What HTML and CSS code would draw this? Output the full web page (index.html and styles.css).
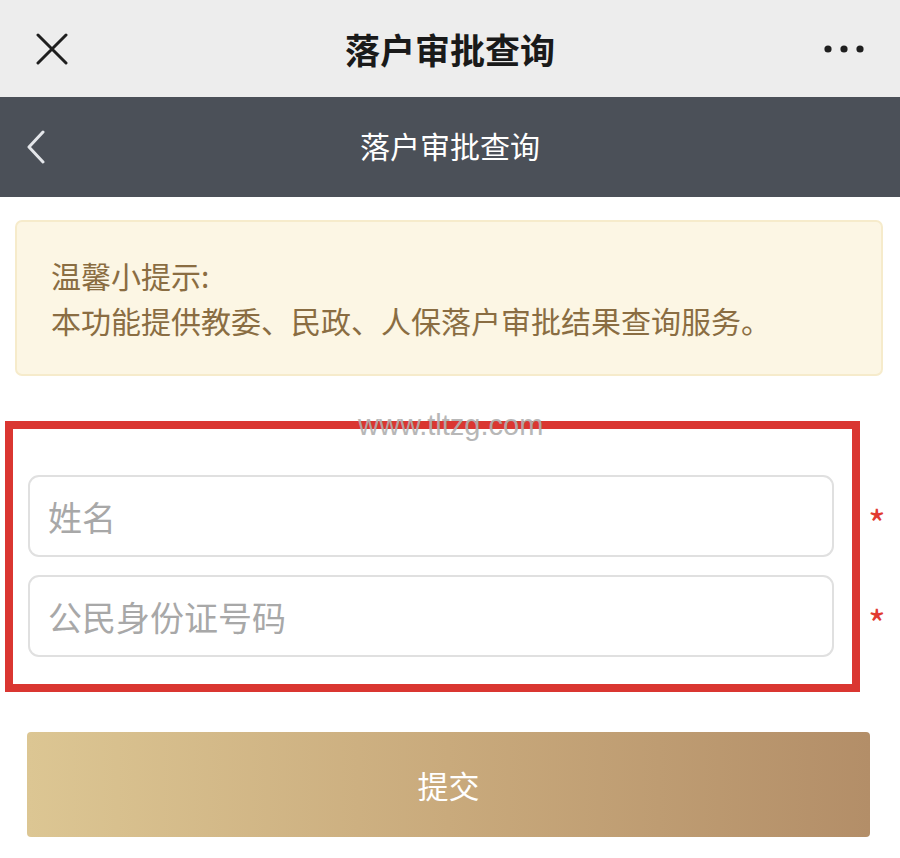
FILE: index.html
```html
<!DOCTYPE html>
<html lang="zh-CN">
  <head>
    <meta charset="UTF-8" />
    <meta name="viewport" content="width=device-width, initial-scale=1.0" />
    <title>落户审批查询</title>
    <link rel="stylesheet" href="styles.css">
  </head>
  <body>
    <div class="top-bar">
      <svg class="close-icon" width="32" height="32" viewBox="0 0 32 32">
        <path d="M2 2 L30 30 M30 2 L2 30" stroke="#1f1f1f" stroke-width="3" fill="none" stroke-linecap="round" />
      </svg>
      <div class="top-title">落户审批查询</div>
      <svg class="more-icon" width="40" height="10" viewBox="0 0 40 10">
        <circle cx="4" cy="5" r="3.6" fill="#1f1f1f" />
        <circle cx="20" cy="5" r="3.6" fill="#1f1f1f" />
        <circle cx="36" cy="5" r="3.6" fill="#1f1f1f" />
      </svg>
    </div>

    <div class="nav-bar">
      <svg class="back-icon" width="20" height="34" viewBox="0 0 20 34">
        <path d="M17 2 L3 17 L17 32" stroke="#e4e6ea" stroke-width="3" fill="none" stroke-linecap="round" stroke-linejoin="round" />
      </svg>
      <div class="nav-title">落户审批查询</div>
    </div>

    <div class="content">
      <div class="tip">
        <p>温馨小提示:</p>
        <p>本功能提供教委、民政、人保落户审批结果查询服务。</p>
      </div>

      <div class="form">
        <div class="form-row">
          <input type="text" placeholder="姓名" />
          <span class="required">*</span>
        </div>
        <div class="form-row">
          <input type="text" placeholder="公民身份证号码" />
          <span class="required">*</span>
        </div>
      </div>

      <button class="submit">提交</button>

      <!-- 标注框与水印 -->
      <div class="mark-box"></div>
      <div class="watermark">www.tltzg.com</div>
    </div>
  </body>
</html>
```

FILE: styles.css
```css
body {
  margin: 0;
  padding: 0;
  background-color: #fff;
  font-family: "Noto Sans CJK SC", "Noto Sans", sans-serif;
  color: #333;
}
.top-bar {
  height: 97px;
  background-color: #ededed;
  display: flex;
  align-items: center;
  justify-content: space-between;
  padding: 0 36px 0 36px;
  box-sizing: border-box;
  position: relative;
}
.top-title {
  position: absolute;
  left: 0;
  right: 0;
  text-align: center;
  font-size: 35px;
  font-weight: 600;
  color: #1a1a1a;
  line-height: 97px;
}
.close-icon,
.more-icon {
  position: relative;
  z-index: 1;
}
.nav-bar {
  height: 100px;
  background-color: #4b5058;
  display: flex;
  align-items: center;
  padding-left: 26px;
  position: relative;
}
.nav-title {
  position: absolute;
  left: 0;
  right: 0;
  top: -2px;
  text-align: center;
  font-size: 30px;
  color: #fff;
  line-height: 100px;
}
.content {
  position: relative;
  padding: 23px 17px 40px 15px;
}
.tip {
  background-color: #fcf6e4;
  border: 2px solid #f6ebcb;
  border-radius: 7px;
  padding: 31px 34px;
  color: #8a6d42;
  font-size: 30px;
  line-height: 45px;
}
.tip p {
  margin: 0;
}
.form {
  margin-top: 99px;
  padding-left: 13px;
}
.form-row {
  display: flex;
  align-items: center;
  margin-bottom: 18px;
}
.form-row input {
  flex-shrink: 0;
  width: 806px;
  height: 82px;
  padding: 0 18px;
  border: 2px solid #e0e0e0;
  border-radius: 11px;
  box-sizing: border-box;
  font-family: inherit;
  font-size: 34px;
  color: #333;
  outline: none;
}
.form-row input::placeholder {
  color: #a8a8a8;
}
.required {
  margin-left: 34px;
  color: #e23a30;
  font-size: 38px;
  line-height: 1;
  padding-top: 14px;
}
.submit {
  display: block;
  margin: 75px 0 0 12px;
  width: 843px;
  height: 105px;
  border: none;
  border-radius: 4px;
  background: linear-gradient(to right, #dcc693, #c9aa7c 50%, #b38e68);
  color: #fff;
  font-family: inherit;
  font-size: 31px;
}
.mark-box {
  position: absolute;
  left: 5px;
  top: 224px;
  width: 855px;
  height: 271px;
  border: 8px solid #da3631;
  box-sizing: border-box;
}
.watermark {
  position: absolute;
  left: 358px;
  top: 212px;
  font-family: "Liberation Sans", sans-serif;
  font-size: 29px;
  color: #b0b0b0;
  opacity: 0.9;
}
```
